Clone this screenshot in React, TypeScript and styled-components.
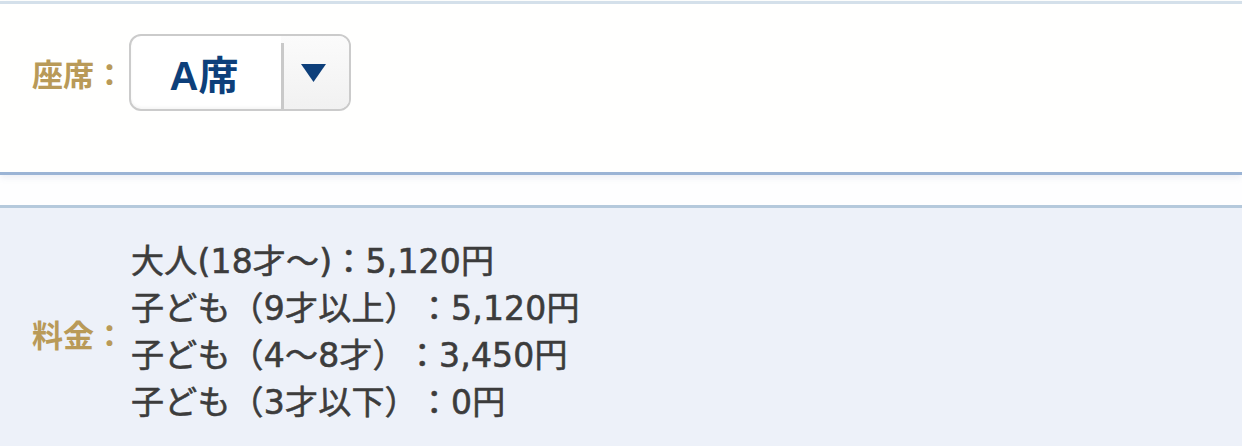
import * as React from 'react';
import styled, { createGlobalStyle } from 'styled-components';

const GlobalStyle = createGlobalStyle`
    html, body {
        margin: 0;
        padding: 0;
        background: #fff;
    }
    body {
        font-family: "Noto Sans CJK JP", "Noto Sans", sans-serif;
        text-spacing-trim: space-all;
    }
`;

const gold = '#b99a58';
const navy = '#0d3f7a';

const Page = styled.div`
    width: 1242px;
    height: 446px;
    overflow: hidden;
    display: flex;
    flex-direction: column;
    background: #fffffe;
`;

const SeatSection = styled.section`
    margin-top: 1px;
    border-top: 3px solid #d4e0ea;
    border-bottom: 3px solid #9bb4d5;
    padding: 30px 0 61px 32px;
    display: flex;
    align-items: center;
    background: #fffffe;
    box-shadow: 0 3px 6px rgba(120, 140, 170, 0.12);
    position: relative;
    z-index: 1;
`;

const Gap = styled.div`
    height: 30px;
    background: #fefeff;
`;

const PriceSection = styled.section`
    flex: 1;
    border-top: 3px solid #b5c9dc;
    background: #edf1f9;
    padding: 30px 0 0 32px;
`;

const PriceRow = styled.div`
    display: flex;
    align-items: center;
`;

const Label = styled.span<{ $shift?: number }>`
    font-size: 31px;
    font-weight: 700;
    color: ${gold};
    line-height: 1;
    white-space: nowrap;
    text-spacing-trim: space-all;
    margin-top: ${p => p.$shift ?? 0}px;
`;

const Select = styled.div`
    margin-left: 4px;
    width: 222px;
    height: 77px;
    box-sizing: border-box;
    border: 2px solid #cbcbcb;
    border-radius: 12px;
    display: flex;
    overflow: hidden;
    background: #fff;
    box-shadow: inset 0 -2px 3px rgba(0, 0, 0, 0.04);
`;

const SelectValue = styled.div`
    flex: 1;
    display: flex;
    align-items: center;
    justify-content: center;
    font-family: "Liberation Sans", "Noto Sans CJK JP", sans-serif;
    font-size: 40px;
    font-weight: 700;
    color: ${navy};
    padding-right: 4px;
    padding-top: 1px;
`;

const SelectToggle = styled.div`
    width: 64px;
    display: flex;
    align-items: center;
    justify-content: center;
    background: linear-gradient(#fbfbfb, #f1f1f1);
    padding-right: 4px;
    position: relative;
    &::before {
        content: '';
        position: absolute;
        left: 0;
        top: 7px;
        bottom: 0;
        width: 3px;
        background: #c9c9c9;
    }
`;

const List = styled.ul`
    list-style: none;
    margin: 0 0 0 6px;
    padding: 0;
    font-family: "DejaVu Sans", "Noto Sans CJK JP", sans-serif;
    font-size: 33px;
    line-height: 47px;
    color: #3c3c3c;
    letter-spacing: 0.2px;
    -webkit-text-stroke: 0.6px #3c3c3c;
    text-spacing-trim: space-all;
`;

const Item = styled.li`
    white-space: pre;
`;

const prices = [
    '大人(18才〜)：5,120円',
    '子ども（9才以上）：5,120円',
    '子ども（4〜8才）：3,450円',
    '子ども（3才以下）：0円',
];

export default function App()
{
    return (
        <React.Fragment>
            <GlobalStyle />
            <Page>
                <SeatSection>
                    <Label>座席：</Label>
                    <Select>
                        <SelectValue>A席</SelectValue>
                        <SelectToggle>
                            <svg width="25" height="18" viewBox="0 0 25 18">
                                <polygon points="0,0 25,0 12.5,18" fill={navy} />
                            </svg>
                        </SelectToggle>
                    </Select>
                </SeatSection>
                <Gap />
                <PriceSection>
                    <PriceRow>
                        <Label $shift={2}>料金：</Label>
                        <List>
                            {prices.map(p => <Item key={p}>{p}</Item>)}
                        </List>
                    </PriceRow>
                </PriceSection>
            </Page>
        </React.Fragment>
    );
}
